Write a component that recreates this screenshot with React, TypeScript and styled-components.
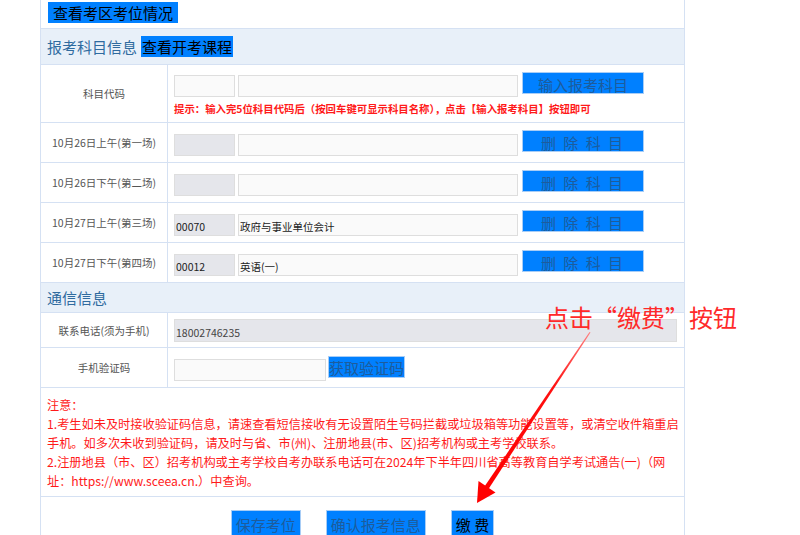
import React from "react";
import styled, { createGlobalStyle } from "styled-components";

const Global = createGlobalStyle`
  html, body { margin: 0; padding: 0; background: #fff; }
  body { font-family: "Noto Sans CJK SC", "Noto Sans", sans-serif; }
  * { box-sizing: border-box; }
`;

const LINE = "#d5e1f3";

const Page = styled.div`
  position: relative;
  width: 800px;
  height: 535px;
  overflow: hidden;
`;

const Form = styled.div`
  margin-left: 40px;
  width: 645px;
  border-left: 1px solid ${LINE};
  border-right: 1px solid ${LINE};
`;

const TopRow = styled.div`
  height: 29px;
  padding-left: 7px;
  border-bottom: 1px solid ${LINE};
`;

const BlueButton = styled.span<{ $dark?: boolean; $w?: number; $h?: number; $lh?: number; $ls?: number }>`
  display: inline-block;
  flex: none;
  background: #0080ff;
  border: 1px solid #a8cdf6;
  color: ${(p) => (p.$dark ? "#000" : "#1d5c9c")};
  font-size: 15px;
  line-height: ${(p) => p.$lh ?? 20}px;
  height: ${(p) => p.$h ?? 22}px;
  ${(p) => (p.$w ? `width: ${p.$w}px;` : "padding: 0 4px;")}
  text-align: center;
  letter-spacing: ${(p) => p.$ls ?? 0}px;
  white-space: nowrap;
  overflow: hidden;
`;

const TopButton = styled.span`
  display: inline-block;
  background: #0080ff;
  color: #000;
  font-size: 15px;
  line-height: 21px;
  height: 21px;
  padding: 0 5px;
`;

const SectionHeader = styled.div<{ $h: number }>`
  height: ${(p) => p.$h}px;
  display: flex;
  align-items: center;
  gap: 4px;
  padding-left: 6px;
  background: #e8f0f9;
  border-bottom: 1px solid ${LINE};
  color: #2f6b9f;
  font-size: 15px;
`;

const HeaderLink = styled.span`
  background: #0080ff;
  color: #000;
  font-size: 15px;
  line-height: 21px;
  height: 21px;
  padding: 0 1px;
`;

const Row = styled.div<{ $h: number }>`
  display: grid;
  grid-template-columns: 127px 1fr;
  height: ${(p) => p.$h}px;
  border-bottom: 1px solid ${LINE};
`;

const Label = styled.div`
  border-right: 1px solid ${LINE};
  display: flex;
  align-items: center;
  justify-content: center;
  font-size: 10.5px;
  color: #555;
  white-space: nowrap;
`;

const Cell = styled.div`
  padding-left: 6px;
  display: flex;
  flex-direction: column;
`;

const InputLine = styled.div`
  display: flex;
  align-items: flex-start;
`;

const Box = styled.div<{ $w: number; $top: number; $h?: number; $gray?: boolean; $mr?: number; $muted?: boolean }>`
  flex: none;
  width: ${(p) => p.$w}px;
  height: ${(p) => p.$h ?? 22}px;
  margin-top: ${(p) => p.$top}px;
  margin-right: ${(p) => p.$mr ?? 0}px;
  background: ${(p) => (p.$gray ? "#e5e6eb" : "#fafafa")};
  border: 1px solid #dedede;
  font-size: 10.5px;
  color: ${(p) => (p.$muted ? "#444" : "#222")};
  padding: 3px 1px 0;
  display: flex;
  align-items: center;
  white-space: nowrap;
  overflow: hidden;
`;

const Spaced = styled.div<{ $top: number }>`
  margin-top: ${(p) => p.$top}px;
`;

const Hint = styled.div`
  margin-top: 3px;
  font-size: 10.4px;
  line-height: 14px;
  font-weight: bold;
  color: #ff1a1a;
  white-space: nowrap;
`;

const NoteRow = styled.div`
  height: 109px;
  padding: 8px 6px 0;
  border-bottom: 1px solid ${LINE};
  color: #ff1a1a;
  font-size: 12.2px;
  line-height: 19px;
`;

const NoteLine = styled.div`
  white-space: nowrap;
`;

const ActionRow = styled.div`
  height: 60px;
  display: flex;
  justify-content: center;
  gap: 25px;
  padding-top: 13px;
`;

const Callout = styled.div`
  position: absolute;
  left: 545px;
  top: 300px;
  color: #ff2a2a;
  font-size: 24px;
  line-height: 34px;
  white-space: nowrap;
`;

const Overlay = styled.svg`
  position: absolute;
  left: 0;
  top: 0;
  pointer-events: none;
`;

const subjects = [
  { label: "10月26日上午(第一场)", code: "", name: "" },
  { label: "10月26日下午(第二场)", code: "", name: "" },
  { label: "10月27日上午(第三场)", code: "00070", name: "政府与事业单位会计" },
  { label: "10月27日下午(第四场)", code: "00012", name: "英语(一)" },
];

const notes = [
  "注意：",
  "1.考生如未及时接收验证码信息，请速查看短信接收有无设置陌生号码拦截或垃圾箱等功能设置等，或清空收件箱重启",
  "手机。如多次未收到验证码，请及时与省、市(州)、注册地县(市、区)招考机构或主考学校联系。",
  "2.注册地县（市、区）招考机构或主考学校自考办联系电话可在2024年下半年四川省高等教育自学考试通告(一)（网",
  "址：https://www.sceea.cn.）中查询。",
];

export default function App() {
  return (
    <Page>
      <Global />
      <Form>
        <TopRow>
          <TopButton>查看考区考位情况</TopButton>
        </TopRow>
        <SectionHeader $h={36}>
          报考科目信息<HeaderLink>查看开考课程</HeaderLink>
        </SectionHeader>
        <Row $h={58}>
          <Label>科目代码</Label>
          <Cell>
            <InputLine>
              <Box $w={61} $top={10} $mr={3} />
              <Box $w={280} $top={10} $mr={4} />
              <Spaced $top={7}>
                <BlueButton $w={122} $h={22} $lh={24}>输入报考科目</BlueButton>
              </Spaced>
            </InputLine>
            <Hint>提示：输入完5位科目代码后（按回车键可显示科目名称），点击【输入报考科目】按钮即可</Hint>
          </Cell>
        </Row>
        {subjects.map((s) => (
          <Row $h={40} key={s.label}>
            <Label>{s.label}</Label>
            <Cell>
              <InputLine>
                <Box $w={61} $top={11} $mr={3} $gray>{s.code}</Box>
                <Box $w={280} $top={11} $mr={4}>{s.name}</Box>
                <Spaced $top={7}>
                  <BlueButton $w={122} $h={22} $lh={24} $ls={2}>删 除 科 目</BlueButton>
                </Spaced>
              </InputLine>
            </Cell>
          </Row>
        ))}
        <SectionHeader $h={30}>通信信息</SectionHeader>
        <Row $h={35}>
          <Label>联系电话(须为手机)</Label>
          <Cell>
            <Box $w={503} $top={6} $h={23} $gray $muted>18002746235</Box>
          </Cell>
        </Row>
        <Row $h={40}>
          <Label>手机验证码</Label>
          <Cell>
            <InputLine>
              <Box $w={152} $top={11} $mr={2} />
              <Spaced $top={8}>
                <BlueButton $w={77} $h={22} $lh={21}>获取验证码</BlueButton>
              </Spaced>
            </InputLine>
          </Cell>
        </Row>
        <NoteRow>
          {notes.map((n) => (
            <NoteLine key={n}>{n}</NoteLine>
          ))}
        </NoteRow>
        <ActionRow>
          <BlueButton $h={28} $lh={28}>保存考位</BlueButton>
          <BlueButton $h={28} $lh={28}>确认报考信息</BlueButton>
          <BlueButton $h={28} $lh={28} $dark>缴 费</BlueButton>
        </ActionRow>
      </Form>
      <Callout>点击“缴费”按钮</Callout>
      <Overlay width="800" height="535" viewBox="0 0 800 535">
        <defs>
          <linearGradient id="shaft" x1="590" y1="332" x2="486" y2="490" gradientUnits="userSpaceOnUse">
            <stop offset="0" stopColor="#ff8080" />
            <stop offset="0.35" stopColor="#ff1010" />
            <stop offset="1" stopColor="#ff0000" />
          </linearGradient>
        </defs>
        <polygon points="589.5,332 590.5,332.6 488.5,489 484.5,486.4" fill="url(#shaft)" />
        <polygon points="477,503 478.5,481 495.5,492.5" fill="#ff0000" />
      </Overlay>
    </Page>
  );
}
